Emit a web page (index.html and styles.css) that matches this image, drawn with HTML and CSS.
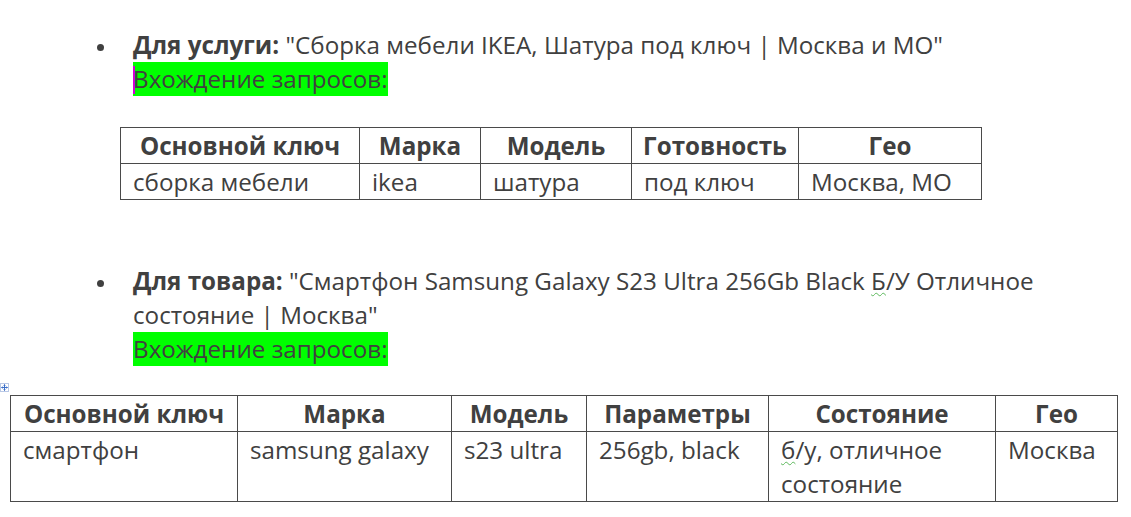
FILE: index.html
```html
<!DOCTYPE html>
<html lang="ru">
<head>
<meta charset="utf-8">
<link rel="stylesheet" href="styles.css">
</head>
<body>
<div class="doc">
  <div class="item item-first">
    <span class="bullet"></span>
    <div class="item-body">
      <p class="line"><b>Для услуги:</b> "Сборка мебели IKEA, Шатура под ключ | Москва и МО"</p>
      <p class="line"><span class="hl"><span class="mark"></span>Вхождение запросов:</span></p>
    </div>
  </div>
  <table class="tbl tbl1">
    <colgroup>
      <col class="c1a"><col class="c1b"><col class="c1c"><col class="c1d"><col class="c1e">
    </colgroup>
    <tr><th>Основной ключ</th><th>Марка</th><th>Модель</th><th>Готовность</th><th>Гео</th></tr>
    <tr><td>сборка мебели</td><td>ikea</td><td>шатура</td><td>под ключ</td><td>Москва, МО</td></tr>
  </table>

  <div class="item item-second">
    <span class="bullet"></span>
    <div class="item-body">
      <p class="line"><b>Для товара:</b> "Смартфон Samsung Galaxy S23 Ultra 256Gb Black <span class="sq">Б</span>/У Отличное</p>
      <p class="line">состояние | Москва"</p>
      <p class="line"><span class="hl">Вхождение запросов:</span></p>
    </div>
  </div>
  <div class="tbl2-wrap">
    <span class="handle">
      <svg width="9" height="9" viewBox="0 0 9 9"><rect x="0.5" y="0.5" width="8" height="8" fill="#fff" stroke="#b9c8e6"/><path d="M4.5 1.5v6M1.5 4.5h6" stroke="#3a6ec8" stroke-width="1"/><path d="M4.5 1.5l-1 1M4.5 1.5l1 1M4.5 7.5l-1-1M4.5 7.5l1-1M1.5 4.5l1-1M1.5 4.5l1 1M7.5 4.5l-1-1M7.5 4.5l-1 1" stroke="#3a6ec8" stroke-width="0.8"/></svg>
    </span>
    <table class="tbl tbl2">
      <colgroup>
        <col class="c2a"><col class="c2b"><col class="c2c"><col class="c2d"><col class="c2e"><col class="c2f">
      </colgroup>
      <tr><th>Основной ключ</th><th>Марка</th><th>Модель</th><th>Параметры</th><th>Состояние</th><th>Гео</th></tr>
      <tr><td>смартфон</td><td>samsung galaxy</td><td>s23 ultra</td><td>256gb, black</td><td><span class="sq">б</span>/у, отличное состояние</td><td>Москва</td></tr>
    </table>
    <span class="resize"></span>
  </div>
</div>
</body>
</html>
```
FILE: styles.css
```css
html, body {
  margin: 0;
  padding: 0;
  background: #fff;
}
body {
  font-family: "Open Sans", "Noto Sans", sans-serif;
  font-size: 24.2px;
  color: #404040;
}
.doc {
  padding-top: 28px;
}
.item {
  display: flex;
  padding-left: 94px;
}
.bullet {
  width: 39px;
  flex: none;
  height: 34px;
  display: flex;
  align-items: center;
}
.bullet::before {
  content: "";
  width: 7px;
  height: 7px;
  border-radius: 50%;
  background: #404040;
  margin-left: 3px;
  margin-top: 4px;
}
.item-body {
  flex: 1;
}
.line {
  margin: 0;
  height: 34px;
  line-height: 34px;
  white-space: nowrap;
}
.line b {
  font-weight: 700;
}
.hl {
  display: inline-block;
  position: relative;
  background: #00ff00;
  height: 34px;
  line-height: 34px;
}
.mark {
  position: absolute;
  left: 0;
  top: 4px;
  width: 2px;
  height: 28px;
  background: #d400d4;
}
.sq {
  text-decoration: underline wavy #5cb85c;
  text-decoration-thickness: 1px;
  text-underline-offset: 2px;
}
.tbl {
  border-collapse: collapse;
  table-layout: fixed;
}
.tbl th, .tbl td {
  border: 1px solid #4a4a4a;
  padding: 1px 12px 0;
  line-height: 34px;
  text-align: left;
  vertical-align: top;
}
.tbl th {
  text-align: center;
  font-weight: 700;
  padding: 1px 0 0;
  white-space: nowrap;
}
.c1a { width: 239px; }
.c1b { width: 121px; }
.c1c { width: 151px; }
.c1d { width: 167px; }
.c1e { width: 183px; }
.c2a { width: 227px; }
.c2b { width: 214px; }
.c2c { width: 135px; }
.c2d { width: 182px; }
.c2e { width: 227px; }
.c2f { width: 122px; }
.tbl1 {
  width: 862px;
  margin: 31px 0 0 120px;
}
.item-second {
  margin-top: 64px;
}
.tbl2-wrap {
  position: relative;
  margin: 29px 0 0 10px;
}
.tbl2 {
  width: 1108px;
}
.handle {
  position: absolute;
  left: -10px;
  top: -12px;
  line-height: 0;
}
.resize {
  position: absolute;
  left: 1108px;
  top: 107px;
  width: 5px;
  height: 5px;
  border: 1px solid #9a9a9a;
  background: #fff;
}
```
